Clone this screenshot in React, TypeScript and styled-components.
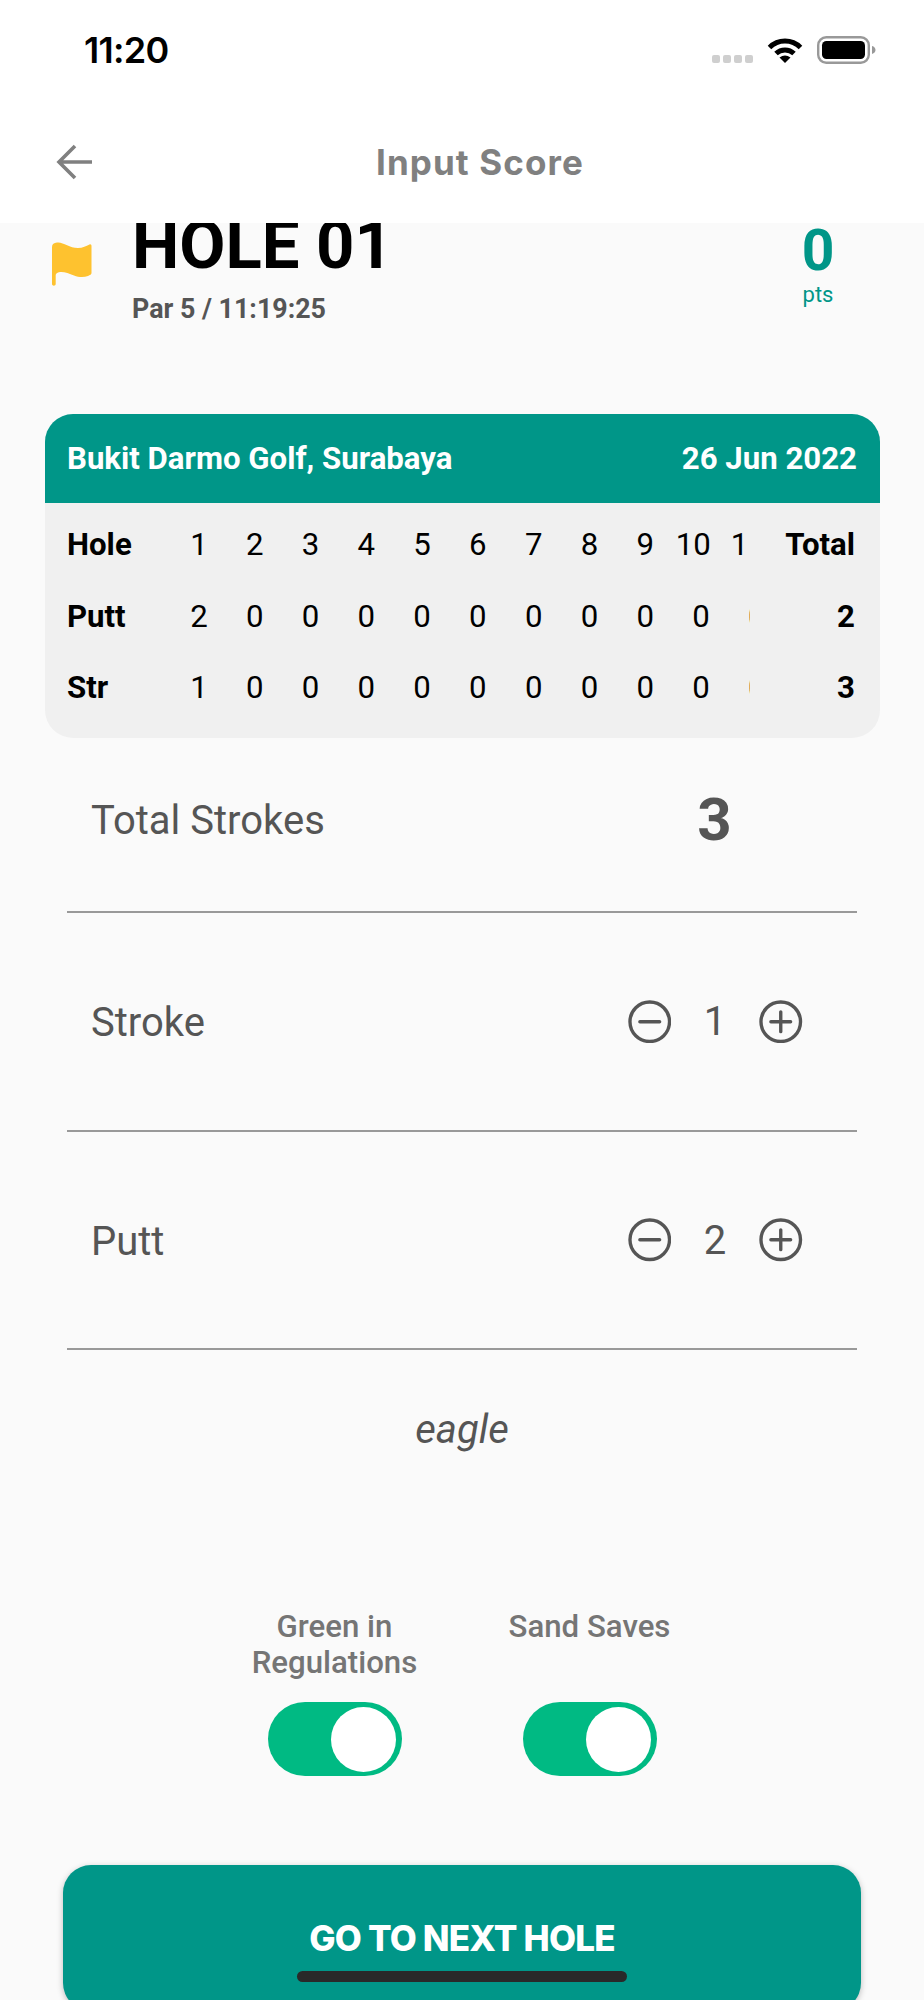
import React from "react";
import styled, { createGlobalStyle } from "styled-components";

const Global = createGlobalStyle`
  html, body { margin: 0; padding: 0; background: #fafafa; }
  * { box-sizing: border-box; }
`;

const Page = styled.div`
  width: 924px;
  height: 2000px;
  position: relative;
  overflow: hidden;
  display: flex;
  flex-direction: column;
  background: #fafafa;
  font-family: Roboto, "Liberation Sans", sans-serif;
`;

const TopBar = styled.header`
  height: 223px;
  flex: none;
  background: #fff;
  position: relative;
  z-index: 2;
  display: flex;
  flex-direction: column;
`;

const StatusBar = styled.div`
  height: 100px;
  padding: 0 48px 0 84px;
  display: flex;
  align-items: center;
  justify-content: space-between;
`;

const Clock = styled.span`
  font-family: Inter, sans-serif;
  font-size: 36px;
  font-weight: 600;
  color: #000;
  letter-spacing: -0.7px;
`;

const StatusIcons = styled.div`
  display: flex;
  align-items: center;
`;

const SignalDots = styled.div`
  display: flex;
  gap: 3px;
  margin: 18px 14px 0 0;
`;

const SignalDot = styled.i`
  width: 8px;
  height: 8px;
  border-radius: 2px;
  background: #cfcfcf;
`;

const Nav = styled.nav`
  height: 123px;
  padding: 0 0 0 56px;
  display: flex;
  align-items: center;
  position: relative;
`;

const NavTitle = styled.h1`
  margin: 0 0 0 284px;
  font-family: Inter, sans-serif;
  font-size: 35px;
  font-weight: 700;
  letter-spacing: 1.1px;
  color: #808080;
`;

const Scroller = styled.main`
  flex: 1;
  min-height: 0;
  overflow: hidden;
  display: flex;
  flex-direction: column;
`;

const HoleHeader = styled.section`
  margin-top: -10px;
  padding: 0 71px 0 52px;
  height: 201px;
  flex: none;
  display: flex;
  align-items: flex-start;
`;

const FlagIcon = styled.svg`
  width: 40px;
  height: 44px;
  margin-top: 29px;
  flex: none;
`;

const HoleInfo = styled.div`
  margin-left: 40px;
  flex: 1;
`;

const HoleTitle = styled.div`
  font-size: 67px;
  line-height: 64px;
  font-weight: 700;
  color: #000;
`;

const HoleMeta = styled.div`
  margin-top: 17px;
  font-size: 26.8px;
  line-height: 30px;
  font-weight: 700;
  color: #555;
`;

const Points = styled.div`
  width: 70px;
  margin-top: 8px;
  text-align: center;
  color: #009688;
`;

const PointsValue = styled.div`
  font-size: 57px;
  line-height: 60px;
  font-weight: 700;
`;

const PointsUnit = styled.div`
  font-size: 22px;
  line-height: 27px;
`;

const ScoreCard = styled.section`
  margin: 0 44px 0 45px;
  height: 324px;
  flex: none;
  border-radius: 28px;
  overflow: hidden;
  background: #f0f0f0;
`;

const CardHeader = styled.div`
  height: 89px;
  padding: 0 23px 0 22px;
  background: #009688;
  color: #fff;
  display: flex;
  align-items: center;
  justify-content: space-between;
  font-size: 31.2px;
  font-weight: 700;
`;

const CardBody = styled.div`
  padding: 6px 25px 0 22px;
`;

const ScoreRow = styled.div`
  height: 71.5px;
  display: flex;
  align-items: center;
  font-size: 31.2px;
  color: #000;
`;

const RowLabel = styled.div`
  width: 104px;
  flex: none;
  font-weight: 700;
`;

const Cells = styled.div`
  width: 578.5px;
  flex: none;
  display: flex;
  overflow: hidden;
`;

const Cell = styled.div<{ $w?: number }>`
  width: ${(p) => p.$w ?? 55.8}px;
  flex: none;
  text-align: center;
  white-space: nowrap;
`;

const RowTotal = styled.div`
  flex: 1;
  text-align: right;
  font-weight: 700;
`;

const FormRow = styled.div<{ $h: number; $pt: number; $pb: number }>`
  height: ${(p) => p.$h}px;
  margin: 0 67px;
  padding: ${(p) => p.$pt}px 0 ${(p) => p.$pb}px 24px;
  flex: none;
  display: flex;
  align-items: center;
  border-bottom: 2px solid #999;
  color: #555;
`;

const FormLabel = styled.div`
  width: 536.5px;
  flex: none;
  font-size: 40px;
`;

const BigTotal = styled.div`
  width: 174px;
  margin-bottom: 2px;
  text-align: center;
  font-size: 60px;
  font-weight: 700;
`;

const Stepper = styled.div`
  display: flex;
  align-items: center;
  width: 180px;
  margin-bottom: 2px;
`;

const StepValue = styled.div`
  width: 88px;
  text-align: center;
  font-size: 40px;
`;

const RoundIcon = styled.svg`
  width: 43.5px;
  height: 43.5px;
  flex: none;
`;

const Verdict = styled.div`
  height: 132px;
  flex: none;
  padding-top: 57px;
  text-align: center;
  font-size: 40px;
  line-height: 46px;
  font-style: italic;
  color: #555;
`;

const Toggles = styled.section`
  margin-top: 127px;
  flex: none;
  display: flex;
  justify-content: center;
  gap: 67px;
`;

const ToggleItem = styled.div`
  width: 188px;
  display: flex;
  flex-direction: column;
  align-items: center;
`;

const ToggleLabel = styled.div`
  height: 93px;
  text-align: center;
  font-size: 31.2px;
  line-height: 36px;
  font-weight: 500;
  color: #757575;
`;

const Switch = styled.div`
  width: 134px;
  height: 74px;
  padding: 5px 6px 4px 0;
  border-radius: 37px;
  background: #00ba83;
  display: flex;
  justify-content: flex-end;
`;

const Knob = styled.div`
  width: 65px;
  height: 65px;
  border-radius: 50%;
  background: #fff;
`;

const NextButton = styled.button`
  margin: 89px 63px 0;
  height: 146px;
  flex: none;
  width: 798px;
  border: 0;
  border-radius: 28px;
  padding: 0;
  background: #009688;
  box-shadow: 0 2px 6px rgba(0, 0, 0, 0.25);
  color: #fff;
  font-family: Inter, sans-serif;
  font-size: 35px;
  font-weight: 800;
  letter-spacing: -0.8px;
`;

const HomeIndicator = styled.div`
  position: absolute;
  left: 297px;
  top: 1971px;
  width: 330px;
  height: 11px;
  border-radius: 6px;
  background: #292929;
`;

const Minus = () => (
  <RoundIcon viewBox="0 0 44 44" fill="none" stroke="#555" strokeWidth="3.4" strokeLinecap="round">
    <circle cx="22" cy="22" r="20" />
    <path d="M12 22h20" />
  </RoundIcon>
);

const Plus = () => (
  <RoundIcon viewBox="0 0 44 44" fill="none" stroke="#555" strokeWidth="3.4" strokeLinecap="round">
    <circle cx="22" cy="22" r="20" />
    <path d="M12 22h20M22 12v20" />
  </RoundIcon>
);

const putts = [2, 0, 0, 0, 0, 0, 0, 0, 0, 0, 0];
const strokes = [1, 0, 0, 0, 0, 0, 0, 0, 0, 0, 0];

export default function App() {
  return (
    <Page>
      <Global />
      <TopBar>
        <StatusBar>
          <Clock>11:20</Clock>
          <StatusIcons>
            <SignalDots>
              {[0, 1, 2, 3].map((i) => (
                <SignalDot key={i} />
              ))}
            </SignalDots>
            <svg width="36" height="26" viewBox="0 0 36 26">
              <path d="M2.5 10.5A22 22 0 0 1 33.5 10.5" fill="none" stroke="#000" strokeWidth="5" />
              <path d="M9 16.5A13 13 0 0 1 27 16.5" fill="none" stroke="#000" strokeWidth="5" />
              <path d="M12.5 20.5Q18 16.5 23.5 20.5L18 26Z" fill="#000" />
            </svg>
            <svg width="59" height="28" viewBox="0 0 59 28" style={{ marginLeft: 14 }}>
              <rect x="1.2" y="1.2" width="50.6" height="25.6" rx="8" fill="#fff" stroke="#999" strokeWidth="2.4" />
              <rect x="5" y="5" width="43" height="18" rx="4.5" fill="#000" />
              <path d="M55 10c2.2.6 3.5 2.2 3.5 4s-1.3 3.4-3.5 4z" fill="#999" />
            </svg>
          </StatusIcons>
        </StatusBar>
        <Nav>
          <svg width="36" height="36" viewBox="0 0 36 36" fill="none" stroke="#808080" strokeWidth="3.6">
            <path d="M36 18H3M19 2 3 18l16 16" />
          </svg>
          <NavTitle>Input Score</NavTitle>
        </Nav>
      </TopBar>
      <Scroller>
        <HoleHeader>
          <FlagIcon viewBox="0 0 40 44">
            <path
              d="M0 5C0 2 2 1 5 .5C11-.5 17 6 26 6C31 6 34 4 37.5 2.5C38.8 2 39.5 3 39.5 4V31C39.5 32.5 38 33 36 34C32 35.5 27 35.5 22 33.5C17 31.5 12 29.5 8 30C5 30.5 3.7 32 3.7 33V42C3.7 44.3 0 44.3 0 42Z"
              fill="#fec22f"
            />
          </FlagIcon>
          <HoleInfo>
            <HoleTitle>HOLE 01</HoleTitle>
            <HoleMeta>Par 5 / 11:19:25</HoleMeta>
          </HoleInfo>
          <Points>
            <PointsValue>0</PointsValue>
            <PointsUnit>pts</PointsUnit>
          </Points>
        </HoleHeader>
        <ScoreCard>
          <CardHeader>
            <span>Bukit Darmo Golf, Surabaya</span>
            <span>26 Jun 2022</span>
          </CardHeader>
          <CardBody>
            <ScoreRow>
              <RowLabel>Hole</RowLabel>
              <Cells>
                {[1, 2, 3, 4, 5, 6, 7, 8, 9].map((n) => (
                  <Cell key={n}>{n}</Cell>
                ))}
                <Cell $w={40}>10</Cell>
                <Cell $w={70}>11</Cell>
              </Cells>
              <RowTotal>Total</RowTotal>
            </ScoreRow>
            <ScoreRow>
              <RowLabel>Putt</RowLabel>
              <Cells>
                {putts.map((n, i) => (
                  <Cell key={i}>{n}</Cell>
                ))}
              </Cells>
              <RowTotal>2</RowTotal>
            </ScoreRow>
            <ScoreRow>
              <RowLabel>Str</RowLabel>
              <Cells>
                {strokes.map((n, i) => (
                  <Cell key={i}>{n}</Cell>
                ))}
              </Cells>
              <RowTotal>3</RowTotal>
            </ScoreRow>
          </CardBody>
        </ScoreCard>
        <FormRow $h={175} $pt={0} $pb={9}>
          <FormLabel>Total Strokes</FormLabel>
          <BigTotal>3</BigTotal>
        </FormRow>
        <FormRow $h={219} $pt={2} $pb={0}>
          <FormLabel>Stroke</FormLabel>
          <Stepper>
            <Minus />
            <StepValue>1</StepValue>
            <Plus />
          </Stepper>
        </FormRow>
        <FormRow $h={218} $pt={2} $pb={0}>
          <FormLabel>Putt</FormLabel>
          <Stepper>
            <Minus />
            <StepValue>2</StepValue>
            <Plus />
          </Stepper>
        </FormRow>
        <Verdict>eagle</Verdict>
        <Toggles>
          <ToggleItem>
            <ToggleLabel>
              Green in
              <br />
              Regulations
            </ToggleLabel>
            <Switch>
              <Knob />
            </Switch>
          </ToggleItem>
          <ToggleItem>
            <ToggleLabel>Sand Saves</ToggleLabel>
            <Switch>
              <Knob />
            </Switch>
          </ToggleItem>
        </Toggles>
        <NextButton>GO TO NEXT HOLE</NextButton>
      </Scroller>
      <HomeIndicator />
    </Page>
  );
}
